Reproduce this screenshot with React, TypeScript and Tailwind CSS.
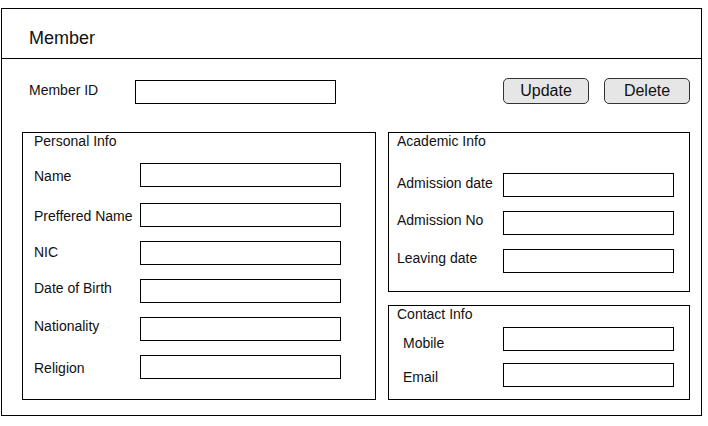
import React from "react";

const Box = ({ w, className = "" }: { w: string; className?: string }) => (
  <div className={`${w} h-[24px] border border-black bg-white shrink-0 ${className}`} />
);

export default function App() {
  return (
    <div
      className="w-[708px] h-[426px] bg-white text-[#111] overflow-hidden"
      style={{ fontFamily: '"Liberation Sans", Arial, sans-serif' }}
    >
      <div className="mt-[8px] ml-[1px] w-[701px] h-[408px] border border-black flex flex-col">
        {/* Header */}
        <div className="h-[50px] border-b border-black pl-[27px] pt-[19px] shrink-0">
          <div className="text-[18px] leading-[20px]">Member</div>
        </div>

        {/* Member ID row */}
        <div className="flex items-start pl-[27px] pr-[11px] pt-[19px]">
          <div className="w-[106px] mt-[4px] text-[14px] leading-[16px]">Member ID</div>
          <Box w="w-[201px]" className="mt-[2px]" />
          <div className="ml-auto flex gap-[15px]">
            <button className="w-[86px] h-[26px] rounded-[5px] border border-[#333] bg-[#e6e6e6] text-[16px] leading-[18px] text-[#111]">
              Update
            </button>
            <button className="w-[86px] h-[26px] rounded-[5px] border border-[#333] bg-[#e6e6e6] text-[16px] leading-[18px] text-[#111]">
              Delete
            </button>
          </div>
        </div>

        {/* Panels */}
        <div className="flex items-start gap-[12px] pl-[20px] mt-[28px]">
          {/* Personal Info */}
          <div className="w-[354px] h-[268px] border border-black pl-[11px] text-[14px] leading-[16px]">
            <div>Personal Info</div>
            <div className="flex items-start mt-[14px]">
              <div className="w-[106px] mt-[5px]">Name</div>
              <Box w="w-[201px]" />
            </div>
            <div className="flex items-start mt-[16px]">
              <div className="w-[106px] mt-[5px] whitespace-nowrap">Preffered Name</div>
              <Box w="w-[201px]" />
            </div>
            <div className="flex items-start mt-[14px]">
              <div className="w-[106px] mt-[3px]">NIC</div>
              <Box w="w-[201px]" />
            </div>
            <div className="flex items-start mt-[14px]">
              <div className="w-[106px] mt-[1px]">Date of Birth</div>
              <Box w="w-[201px]" />
            </div>
            <div className="flex items-start mt-[14px]">
              <div className="w-[106px] mt-[1px]">Nationality</div>
              <Box w="w-[201px]" />
            </div>
            <div className="flex items-start mt-[14px]">
              <div className="w-[106px] mt-[5px]">Religion</div>
              <Box w="w-[201px]" />
            </div>
          </div>

          {/* Right column */}
          <div className="flex flex-col gap-[13px] text-[14px] leading-[16px]">
            <div className="w-[302px] h-[160px] border border-black pl-[8px]">
              <div>Academic Info</div>
              <div className="flex items-start mt-[24px]">
                <div className="w-[106px] mt-[2px]">Admission date</div>
                <Box w="w-[171px]" />
              </div>
              <div className="flex items-start mt-[14px]">
                <div className="w-[106px] mt-[1px]">Admission No</div>
                <Box w="w-[171px]" />
              </div>
              <div className="flex items-start mt-[14px]">
                <div className="w-[106px] mt-[1px]">Leaving date</div>
                <Box w="w-[171px]" />
              </div>
            </div>
            <div className="w-[302px] h-[95px] border border-black pl-[8px]">
              <div>Contact Info</div>
              <div className="flex items-start mt-[5px]">
                <div className="w-[106px] pl-[6px] mt-[8px]">Mobile</div>
                <Box w="w-[171px]" />
              </div>
              <div className="flex items-start mt-[12px]">
                <div className="w-[106px] pl-[6px] mt-[6px]">Email</div>
                <Box w="w-[171px]" />
              </div>
            </div>
          </div>
        </div>
      </div>
    </div>
  );
}
